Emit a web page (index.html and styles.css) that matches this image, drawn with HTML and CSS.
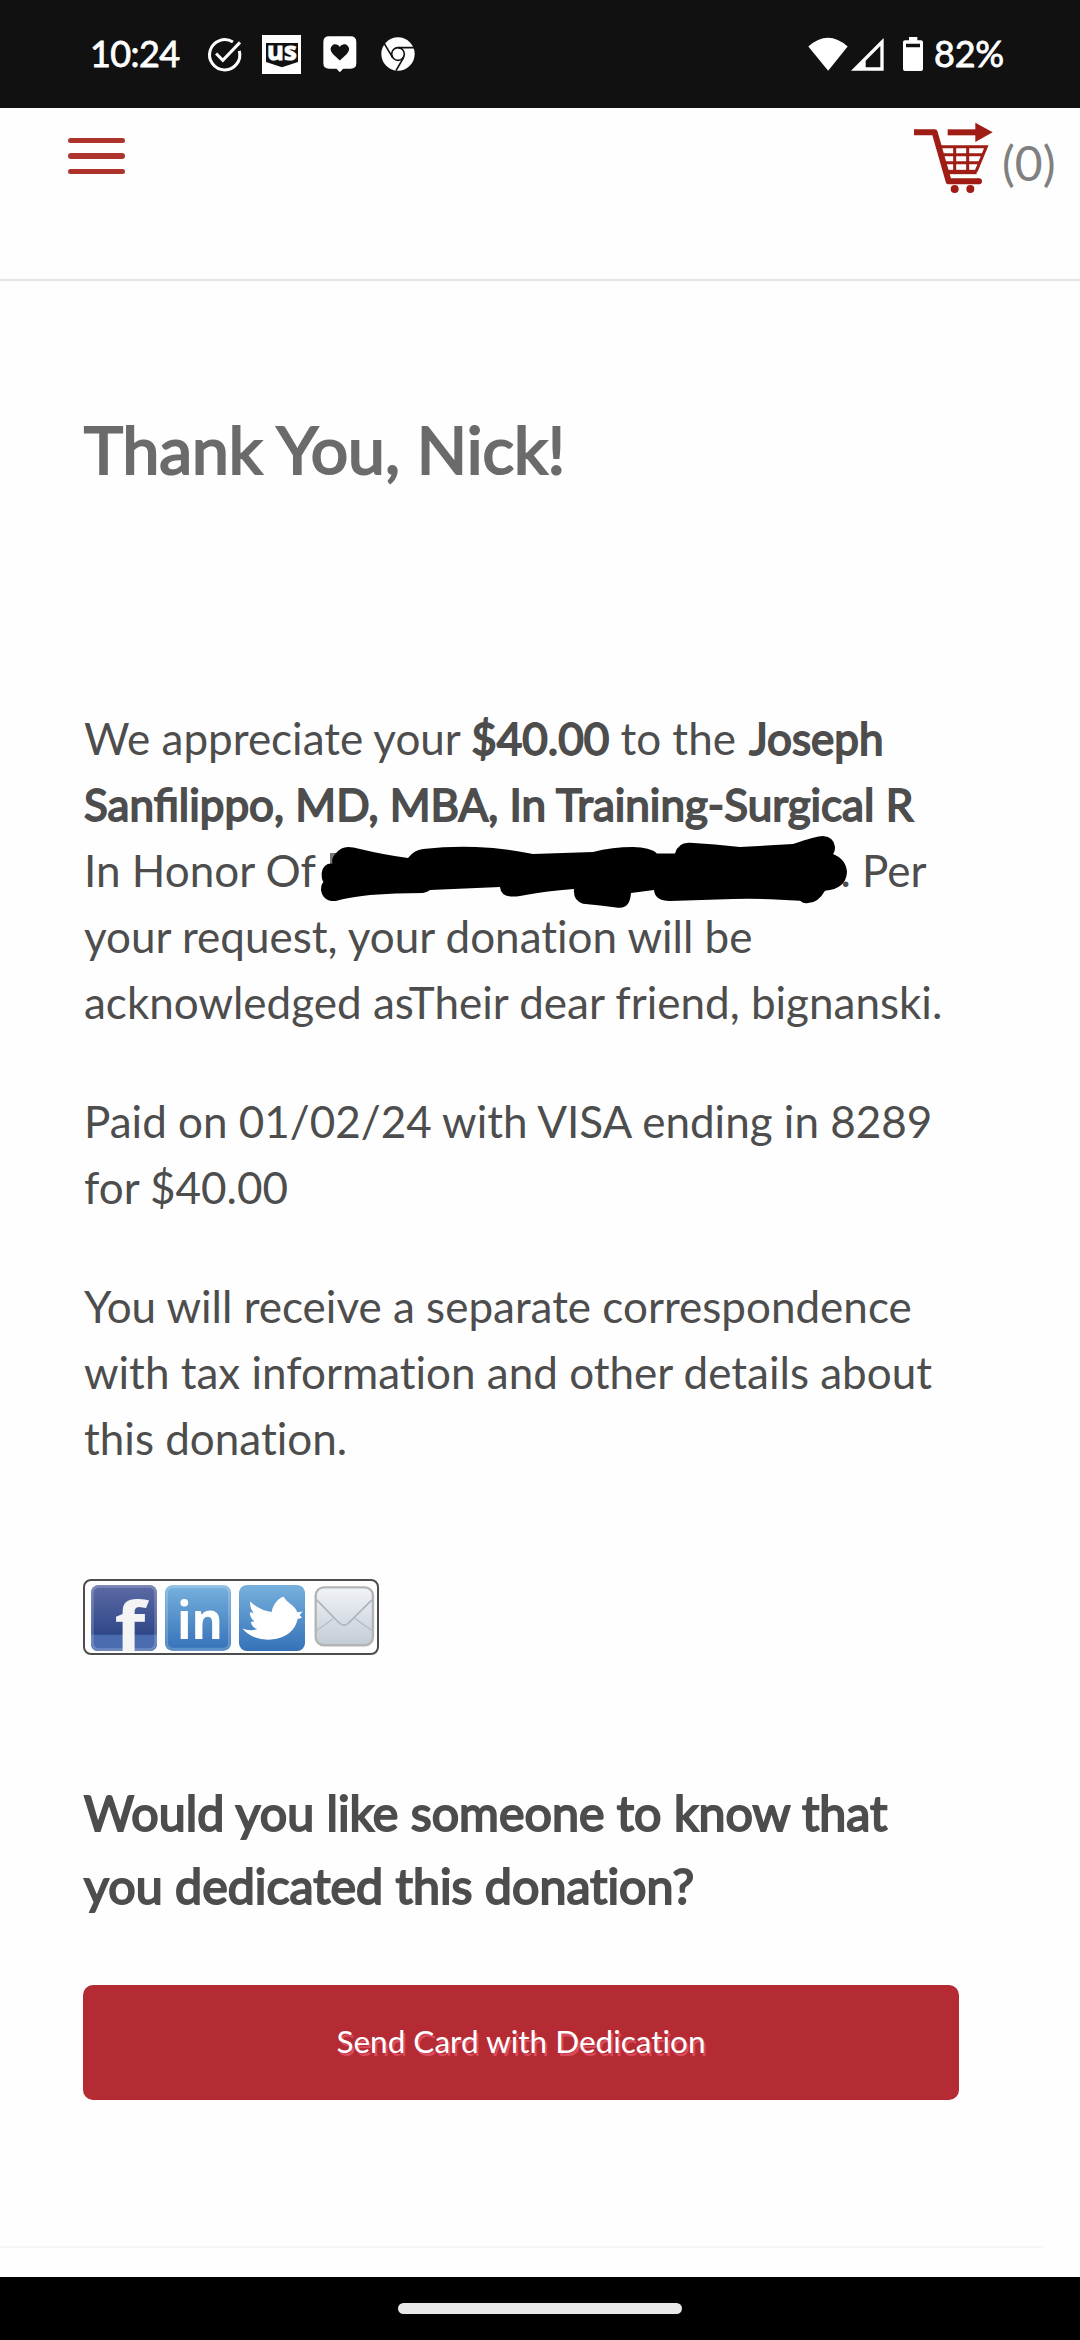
FILE: index.html
```html
<!DOCTYPE html>
<html lang="en">
<head>
    <meta charset="UTF-8">
    <meta name="viewport" content="width=device-width, initial-scale=1.0">
    <title>Thank You</title>
    <link rel="stylesheet" href="styles.css">
</head>
<body>
    <div class="status-bar">
        <div class="status-left">
            <span class="clock">10:24</span>
            <svg class="icon-check" viewBox="440 112 104 104" fill="none" stroke="#fff" stroke-width="9">
                <path d="M517 127A45 45 0 1 0 536 153"/>
                <path d="M467 161L487 181L538 128"/>
            </svg>
            <svg class="icon-us" viewBox="606 105 117 117">
                <rect x="606" y="105" width="117" height="117" fill="#fff"/>
                <path d="M618 129H714V186L666 202L618 186Z" fill="#111"/>
                <text class="us-text" x="621" y="181" textLength="89" lengthAdjust="spacingAndGlyphs">us</text>
            </svg>
            <svg class="icon-heart" viewBox="790 110 101 110">
                <path d="M808 111H872Q889 111 889 128V190Q889 207 872 207H850L840 218L830 207H808Q791 207 791 190V128Q791 111 808 111Z" fill="#fff"/>
                <path d="M840 183L820 164Q808 151 815 141C822 131 835 134 840 143C845 134 858 131 865 141Q872 151 860 164Z" fill="#111"/>
            </svg>
            <svg class="icon-chrome" viewBox="963 114 102 102">
                <circle cx="1014" cy="165" r="50" fill="#fff"/>
                <g fill="none" stroke="#111" stroke-width="5">
                    <circle cx="1014" cy="165" r="19"/>
                    <path d="M1014 146H1062M998 176L973 134M1031 175L1008 215"/>
                </g>
            </svg>
        </div>
        <div class="status-right">
            <svg class="icon-wifi" viewBox="83 109 119 101">
                <path d="M84 137Q142 85 201 137L143 209Z" fill="#fff"/>
            </svg>
            <svg class="icon-signal" viewBox="211 110 99 100">
                <path d="M309 112V210H211ZM299 136L255 180V200H299Z" fill="#fff" fill-rule="evenodd"/>
            </svg>
            <svg class="icon-battery" viewBox="366 108 60 102">
                <path d="M384 108H409V118H420Q426 118 426 124V204Q426 210 420 210H372Q366 210 366 204V124Q366 118 372 118H384ZM375 128V139H417V128Z" fill="#fff" fill-rule="evenodd"/>
            </svg>
            <span class="percent">82%</span>
        </div>
    </div>

    <header class="header">
        <div class="menu">
            <span></span>
            <span></span>
            <span></span>
        </div>
        <div class="cart">
            <svg class="icon-cart" viewBox="402 366 237 213" fill="none" stroke="#9f1d14">
                <path d="M402 397H464L506 544H596" stroke-width="18" stroke-linejoin="round"/>
                <path d="M596 544H597" stroke-width="18" stroke-linecap="round"/>
                <path d="M503 397H592" stroke-width="18"/>
                <path d="M586 368L638 397L586 426Z" fill="#9f1d14" stroke="none"/>
                <path d="M482 440H619L588 515M490 464H610M496 488H600M524 440V515M563 440V515" stroke-width="9"/>
                <path d="M500 516H590" stroke-width="13"/>
                <circle cx="524" cy="567" r="12" fill="#9f1d14" stroke="none"/>
                <circle cx="571" cy="567" r="12" fill="#9f1d14" stroke="none"/>
            </svg>
            <span class="cart-count">(0)</span>
        </div>
    </header>

    <main class="content">
        <h1>Thank You, Nick!</h1>

        <p>We appreciate your <b>$40.00</b> to the <b class="name">Joseph</b><br><b>Sanfilippo, MD, MBA, In Training-Surgical R</b><br>In Honor Of <span class="redacted"><svg viewBox="321 835 527 74">
            <rect x="330" y="853" width="6" height="12" fill="#777"/>
            <path d="M321 890Q321 884 323.500 882Q321.500 880 321.700 873Q323 863 332.500 863.500Q331 858 336 853Q341 847 348 847Q353 847 360 849Q385 855 408 858Q414 850 423 849Q450 846 476 847Q505 848 533 854L593 852Q612 847 633 847Q650 847 657 853.500H675Q678 842 690 842.700Q715 844 740 847L793 844Q816 836 823 836Q834 837 835 846.700Q835 852 833 854Q846 859 847 872Q846 889 825 890.700Q818 903 808 903Q804 904 800 900.700Q760 898 733 899L670 901Q655 901 654 890L631 893Q630 909 618 907.700Q600 905 583 903.700Q573 901 574 889Q545 891 520 896Q501 899 500 887L430 890Q428 892 423 893Q395 893 370 895Q345 898 336 901Q323 902 321 890Z"/>
        </svg></span>. Per<br>your request, your donation will be<br>acknowledged asTheir dear friend, bignanski.</p>
        <p>Paid on 01/02/24 with VISA ending in 8289<br>for $40.00</p>
        <p>You will receive a separate correspondence<br>with tax information and other details about<br>this donation.</p>

        <div class="social">
            <svg viewBox="62 74 196 196">
                <defs>
                    <linearGradient id="fb" x1="0" y1="0" x2="0" y2="1">
                        <stop offset="0" stop-color="#5d6ba5"/>
                        <stop offset="0.75" stop-color="#2f4788"/>
                    </linearGradient>
                    <linearGradient id="blue" x1="0" y1="0" x2="0" y2="1">
                        <stop offset="0" stop-color="#76b1dd"/>
                        <stop offset="1" stop-color="#3571b8"/>
                    </linearGradient>
                    <linearGradient id="grey" x1="0" y1="0" x2="0" y2="1">
                        <stop offset="0" stop-color="#f1f4f8"/>
                        <stop offset="1" stop-color="#c3cbd5"/>
                    </linearGradient>
                </defs>
                <rect x="62" y="74" width="196" height="196" rx="22" fill="url(#fb)"/>
                <path d="M62 222H258V248Q258 270 236 270H84Q62 270 62 248Z" fill="#4a6bad"/>
                <rect x="66" y="78" width="188" height="188" rx="19" fill="none" stroke="#fff" stroke-opacity="0.2" stroke-width="8"/>
                <text class="fb-text" x="132" y="269" textLength="92" lengthAdjust="spacingAndGlyphs">f</text>
            </svg>
            <svg viewBox="282 74 198 196">
                <rect x="282" y="74" width="198" height="196" rx="22" fill="url(#blue)"/>
                <rect x="287" y="79" width="188" height="186" rx="18" fill="none" stroke="#fff" stroke-opacity="0.2" stroke-width="8"/>
                <text class="in-text" x="318" y="234" textLength="138" lengthAdjust="spacingAndGlyphs">in</text>
            </svg>
            <svg viewBox="503 74 196 196">
                <rect x="503" y="74" width="196" height="196" rx="24" fill="url(#blue)"/>
                <path d="M513 203Q535 212 558 205Q541 200 538 184L549 182Q535 172 535 154L546 158Q534 140 536 123Q564 150 600 154C604 130 622 112 635 109Q643 122 657 131Q673 143 676 155L692 153L683 163L690 171L677 175C671 206 646 232 598 236Q544 239 513 203Z" fill="#fff"/>
            </svg>
            <svg class="mail" viewBox="724 74 184 196">
                <rect x="732" y="81" width="170" height="172" rx="24" fill="url(#grey)" stroke="#b4b4b4" stroke-width="7"/>
                <path d="M735 209L783 174M899 209L849 174" fill="none" stroke="#b5bcc5" stroke-width="4"/>
                <path d="M735 118L798 183Q816 203 834 183L899 118" fill="none" stroke="#adb4bc" stroke-width="5"/>
            </svg>
        </div>

        <h2>Would you like someone to know that<br>you dedicated this donation?</h2>
        <button class="send-btn">Send Card with Dedication</button>
        <hr class="divider">
    </main>

    <div class="nav-bar">
        <div class="home-pill"></div>
    </div>
</body>
</html>
```
FILE: styles.css
```css
* {
    box-sizing: border-box;
}

body {
    margin: 0;
    height: 2340px;
    display: flex;
    flex-direction: column;
    font-family: Lato, sans-serif;
    font-variant-ligatures: none;
    background-color: #fefefe;
    color: #4d4d4d;
}

svg {
    display: block;
    flex: none;
    overflow: visible;
}

/* phone status bar */
.status-bar {
    height: 108px;
    flex: none;
    background-color: #111;
    color: #fff;
    display: flex;
    justify-content: space-between;
    padding: 0 74px 0 90px;
}

.status-left,
.status-right {
    display: flex;
    align-items: center;
}

.clock,
.percent {
    font-size: 36px;
    line-height: 44px;
    padding-bottom: 2px;
    -webkit-text-stroke: 0.8px #fff;
    white-space: nowrap;
}

.clock {
    width: 117px;
    letter-spacing: -0.6px;
}

.icon-check {
    width: 35px;
    height: 35px;
    margin-right: 20px;
}

.icon-us {
    width: 39px;
    height: 39px;
    margin-right: 22px;
}

.us-text {
    font: bold 74px "Open Sans", sans-serif;
    fill: #fff;
    stroke: #fff;
    stroke-width: 3px;
}

.icon-heart {
    width: 34px;
    height: 37px;
    margin-right: 24px;
}

.icon-chrome {
    width: 34px;
    height: 34px;
}

.icon-wifi {
    width: 40px;
    height: 34px;
    margin-right: 3px;
}

.icon-signal {
    width: 33px;
    height: 34px;
    margin-right: 19px;
}

.icon-battery {
    width: 20px;
    height: 34px;
    margin-right: 11px;
}

.percent {
    width: 72px;
    letter-spacing: -0.2px;
}

/* site header */
.header {
    height: 173px;
    flex: none;
    display: flex;
    justify-content: space-between;
    align-items: flex-start;
    padding: 14px 24px 0 68px;
    border-bottom: 2px solid #e5e5e5;
}

.menu {
    width: 57px;
    margin-top: 16px;
    display: flex;
    flex-direction: column;
    gap: 10px;
}

.menu span {
    height: 5.300px;
    border-radius: 3px;
    background-color: #ad332d;
}

.cart {
    display: flex;
    gap: 9px;
}

.icon-cart {
    width: 79px;
    height: 71px;
}

.cart-count {
    width: 54px;
    margin-top: 12px;
    font-size: 48px;
    line-height: 58px;
    color: #808080;
}

/* main content */
.content {
    flex: 1;
    padding: 128px 121px 0 83px;
}

h1,
h2,
b {
    font-weight: normal;
}

h1 {
    margin: 0 0 216px 1px;
    font-size: 66px;
    line-height: 80px;
    color: #6b6b6b;
    -webkit-text-stroke: 2.200px #6b6b6b;
    white-space: nowrap;
}

p {
    margin: 0 0 53px 1px;
    font-size: 44px;
    line-height: 66px;
    white-space: nowrap;
}

b {
    font-variant-ligatures: normal;
    -webkit-text-stroke: 1.800px #4d4d4d;
}

.name {
    margin-left: 2px;
}

.redacted {
    display: inline-block;
    position: relative;
    width: 514px;
    height: 30px;
}

.redacted svg {
    position: absolute;
    left: -5px;
    top: -22px;
    width: 527px;
    height: 74px;
}

.social {
    width: 296px;
    height: 76px;
    margin-top: 108px;
    padding: 4px 6px;
    display: flex;
    gap: 8px;
    border: 2px solid #4d4d4d;
    border-radius: 8px;
}

.social svg {
    width: 66px;
    height: 66px;
}

.social .mail {
    width: 62px;
}

.fb-text {
    font: bold 204px "Open Sans", sans-serif;
    fill: #f4f4f4;
}

.in-text {
    font: bold 158px "Open Sans", sans-serif;
    fill: #fff;
}

h2 {
    margin: 121px 0 63px 1px;
    font-size: 48.400px;
    line-height: 73px;
    -webkit-text-stroke: 2px #4d4d4d;
    white-space: nowrap;
}

.send-btn {
    display: block;
    width: 876px;
    height: 115px;
    border: none;
    border-radius: 10px;
    background-color: #b52b33;
    color: #fff;
    font-family: Lato, sans-serif;
    font-size: 31.500px;
    font-variant-ligatures: none;
    padding-bottom: 4px;
    text-shadow: 2px 3px 0 #d94a5c;
}

.divider {
    height: 2px;
    margin: 146px -84px 0 -83px;
    border: none;
    background-color: #f5f5f5;
}

/* gesture navigation */
.nav-bar {
    height: 63px;
    flex: none;
    display: flex;
    justify-content: center;
    align-items: center;
    background-color: #000;
}

.home-pill {
    width: 284px;
    height: 11px;
    border-radius: 6px;
    background-color: #e8e8e8;
}
```
